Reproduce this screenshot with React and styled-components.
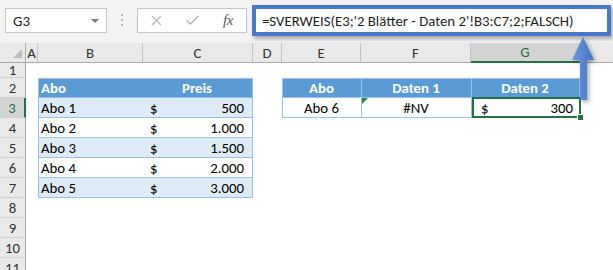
import React from "react";
import styled, { createGlobalStyle } from "styled-components";
import { X, Check } from "lucide-react";

const GlobalStyle = createGlobalStyle`
  html, body {
    margin: 0;
    padding: 0;
    background: #ffffff;
    overflow: hidden;
  }
  body {
    font-family: Carlito, Lato, "Liberation Sans", sans-serif;
  }
`;

const Page = styled.div`
  position: relative;
  width: 613px;
  height: 270px;
  overflow: hidden;
  background: #ffffff;
`;

const Toolbar = styled.div`
  height: 43px;
  box-sizing: border-box;
  background: #f3f3f3;
  display: flex;
  align-items: flex-start;
  padding: 8px 0 0 5px;
`;

const NameBox = styled.div`
  width: 102px;
  height: 25px;
  box-sizing: border-box;
  background: #ffffff;
  border: 1px solid #c6c6c6;
  display: flex;
  align-items: center;
  justify-content: space-between;
  padding: 0 7px 0 7px;
  font-size: 15px;
  color: #262626;
`;

const DropArrow = styled.span`
  width: 0;
  height: 0;
  border-left: 4px solid transparent;
  border-right: 4px solid transparent;
  border-top: 4px solid #7a7a7a;
`;

const Grip = styled.div`
  width: 3px;
  margin: 6px 13px 0 14px;
  display: flex;
  flex-direction: column;
  gap: 3px;
  span {
    width: 2px;
    height: 2px;
    background: #b3b3b3;
  }
`;

const FxBox = styled.div`
  width: 110px;
  height: 25px;
  box-sizing: border-box;
  background: #ffffff;
  border: 1px solid #c6c6c6;
  display: flex;
  align-items: center;
`;

const IconSlot = styled.div`
  width: 36px;
  display: flex;
  justify-content: center;
  align-items: center;
  color: ${(p) => p.$color || "#b8b8b8"};
`;

const FxLabel = styled.span`
  font-family: "Liberation Serif", serif;
  font-style: italic;
  font-size: 15px;
  color: #5a5a5a;
  letter-spacing: -0.5px;
`;

const FormulaBox = styled.div`
  width: 359px;
  height: 31px;
  margin: -3px 0 0 5px;
  box-sizing: border-box;
  background: #ffffff;
  border: 4px solid #4a78c9;
  box-shadow: 2px 3px 4px rgba(0, 0, 0, 0.3);
  display: flex;
  align-items: center;
  padding-left: 6px;
  font-size: 14.8px;
  color: #1f1f1f;
  white-space: nowrap;
  position: relative;
  z-index: 2;
`;

const Sheet = styled.div`
  display: grid;
  grid-template-columns: 26px 12px 105px 110px 29px 79px 110px 109px 80px;
  grid-template-rows: 20px 15px repeat(10, 20px);
  font-size: 14.8px;
  color: #000000;
`;

const Corner = styled.div`
  background: #e9e9e9;
  border-right: 1px solid #ababab;
  border-bottom: 1px solid #ababab;
  box-sizing: border-box;
  position: relative;
  &::after {
    content: "";
    position: absolute;
    right: 3px;
    bottom: 4px;
    border-left: 9px solid transparent;
    border-bottom: 9px solid #bdbdbd;
  }
`;

const ColHead = styled.div`
  box-sizing: border-box;
  background: ${(p) => (p.$active ? "#d3d3d3" : "#e9e9e9")};
  color: ${(p) => (p.$active ? "#217346" : "#333333")};
  border-right: 1px solid #c3c3c3;
  border-bottom: ${(p) => (p.$active ? "2px solid #217346" : "1px solid #ababab")};
  display: flex;
  align-items: center;
  justify-content: center;
  font-size: 14.8px;
`;

const RowHead = styled.div`
  box-sizing: border-box;
  background: ${(p) => (p.$active ? "#d3d3d3" : "#e9e9e9")};
  color: ${(p) => (p.$active ? "#217346" : "#333333")};
  border-right: ${(p) => (p.$active ? "2px solid #217346" : "1px solid #ababab")};
  border-bottom: 1px solid #d0d0d0;
  display: flex;
  align-items: center;
  justify-content: center;
  font-size: 14.8px;
`;

const Blank = styled.div``;

const TCell = styled.div`
  box-sizing: border-box;
  position: relative;
  display: flex;
  align-items: center;
  justify-content: ${(p) =>
    p.$align === "center" ? "center" : p.$align === "split" ? "space-between" : "flex-start"};
  padding: ${(p) => p.$pad || "0 3px 0 2px"};
  background: ${(p) => (p.$head ? "#5b9bd5" : p.$band ? "#ddebf7" : "#ffffff")};
  color: ${(p) => (p.$head ? "#ffffff" : "#000000")};
  font-weight: ${(p) => (p.$head ? 700 : 400)};
  border-top: ${(p) => (p.$top ? "1px solid #9bc2e6" : "none")};
  border-bottom: 1px solid #9bc2e6;
  border-left: ${(p) => (p.$left ? "1px solid #9bc2e6" : "none")};
  border-right: ${(p) => (p.$right ? "1px solid #9bc2e6" : "none")};
  white-space: nowrap;

  ${(p) =>
    p.$error &&
    `&::before {
      content: "";
      position: absolute;
      top: 0;
      left: 0;
      border-top: 6px solid #1e8a3f;
      border-right: 6px solid transparent;
    }`}

  ${(p) =>
    p.$selected &&
    `&::after {
      content: "";
      position: absolute;
      top: -1px;
      left: 0;
      right: -2px;
      bottom: -1px;
      border: 2px solid #217346;
    }`}
`;

const FillHandle = styled.span`
  position: absolute;
  right: -5px;
  bottom: -4px;
  width: 5px;
  height: 5px;
  background: #217346;
  border: 1px solid #ffffff;
  z-index: 1;
`;

const ArrowSvg = styled.svg`
  position: absolute;
  left: 570px;
  top: 35px;
  filter: drop-shadow(2px 2px 2px rgba(0, 0, 0, 0.35));
  z-index: 3;
`;

// H is only partly in view, its letter sits past the right edge
const columns = ["A", "B", "C", "D", "E", "F", "G", ""];

const abos = [
  ["Abo 1", "500"],
  ["Abo 2", "1.000"],
  ["Abo 3", "1.500"],
  ["Abo 4", "2.000"],
  ["Abo 5", "3.000"],
];

// cells of one sheet row, columns A..H
const rowCells = (r) => {
  const cells = columns.map((c, i) => <Blank key={i} />);

  if (r === 2) {
    cells[1] = <TCell key="B" $head $top $left>Abo</TCell>;
    cells[2] = <TCell key="C" $head $top $right $align="center">Preis</TCell>;
    cells[4] = <TCell key="E" $head $top $left $align="center">Abo</TCell>;
    cells[5] = <TCell key="F" $head $top $left $align="center">Daten 1</TCell>;
    cells[6] = <TCell key="G" $head $top $left $right $align="center">Daten 2</TCell>;
  }

  if (r >= 3 && r <= 7) {
    const [name, price] = abos[r - 3];
    const band = r % 2 === 1;
    cells[1] = <TCell key="B" $band={band} $left>{name}</TCell>;
    cells[2] = (
      <TCell key="C" $band={band} $right $align="split" $pad="0 8px 0 7px">
        <span>$</span>
        <span>{price}</span>
      </TCell>
    );
  }

  if (r === 3) {
    cells[4] = <TCell key="E" $left $align="center">Abo 6</TCell>;
    cells[5] = <TCell key="F" $left $error $align="center">#NV</TCell>;
    cells[6] = (
      <TCell key="G" $left $right $selected $align="split" $pad="0 6px 0 9px">
        <span>$</span>
        <span>300</span>
        <FillHandle />
      </TCell>
    );
  }

  return cells;
};

const rows = [1, 2, 3, 4, 5, 6, 7, 8, 9, 10, 11];

const App = () => {
  return (
    <Page>
      <GlobalStyle />
      <Toolbar>
        <NameBox>
          <span>G3</span>
          <DropArrow />
        </NameBox>
        <Grip>
          <span />
          <span />
          <span />
        </Grip>
        <FxBox>
          <IconSlot>
            <X size={17} strokeWidth={1.6} />
          </IconSlot>
          <IconSlot>
            <Check size={17} strokeWidth={2.2} />
          </IconSlot>
          <IconSlot>
            <FxLabel>fx</FxLabel>
          </IconSlot>
        </FxBox>
        <FormulaBox>=SVERWEIS(E3;'2 Blätter - Daten 2'!B3:C7;2;FALSCH)</FormulaBox>
      </Toolbar>

      <Sheet>
        <Corner />
        {columns.map((c, i) => (
          <ColHead key={i} $active={c === "G"}>
            {c}
          </ColHead>
        ))}
        {rows.map((r) => (
          <React.Fragment key={r}>
            <RowHead $active={r === 3}>{r}</RowHead>
            {rowCells(r)}
          </React.Fragment>
        ))}
      </Sheet>

      <ArrowSvg width="28" height="70" viewBox="0 0 28 70">
        <defs>
          <linearGradient id="arrowFill" x1="0" y1="0" x2="1" y2="0">
            <stop offset="0" stopColor="#6a97dc" />
            <stop offset="1" stopColor="#4572c4" />
          </linearGradient>
        </defs>
        <path
          d="M13 2 L24 25 L17 25 L17 65 L10 65 L10 25 L2 25 Z"
          fill="url(#arrowFill)"
        />
      </ArrowSvg>
    </Page>
  );
};

export default App;
